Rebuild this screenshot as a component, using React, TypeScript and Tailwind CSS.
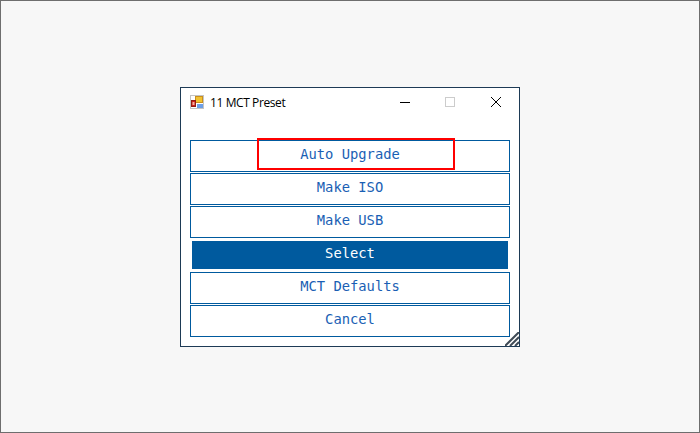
const BUTTONS = ['Auto Upgrade', 'Make ISO', 'Make USB', 'Select', 'MCT Defaults', 'Cancel']

function AppIcon() {
  return (
    <svg width="14" height="14" viewBox="0 0 14 14" className="shrink-0 -mt-[2px]">
      <rect x="0.5" y="0.5" width="13" height="13" fill="#ffffff" stroke="#c4c4c4" />
      <rect x="5.5" y="1.5" width="7" height="6" fill="#f2c230" stroke="#c98f1e" />
      <rect x="1.5" y="5.5" width="4" height="6" fill="#d01f1a" stroke="#8f1d14" />
      <rect x="2.5" y="7" width="2" height="3" fill="#f3b0a0" />
      <rect x="7" y="9" width="6" height="4" fill="#6d9fe6" />
    </svg>
  )
}

function TitleBar() {
  return (
    <div className="flex items-center h-[30px] pl-[9px] shrink-0">
      <AppIcon />
      <span className="ml-[6px] text-[12px] text-black font-['Open_Sans','Noto_Sans',sans-serif] tracking-[-0.4px]">
        11 MCT Preset
      </span>
      <div className="ml-auto flex items-center h-full">
        <svg width="46" height="30" viewBox="0 0 46 30">
          <path d="M19 14.5h10" stroke="#000000" strokeWidth="1" />
        </svg>
        <svg width="46" height="30" viewBox="0 0 46 30">
          <rect x="18.5" y="9.5" width="9" height="9" fill="none" stroke="#cccccc" />
        </svg>
        <svg width="46" height="30" viewBox="0 0 46 30">
          <path d="M18 9l10 10M28 9l-10 10" stroke="#000000" strokeWidth="1" fill="none" />
        </svg>
      </div>
    </div>
  )
}

export default function App() {
  return (
    <div className="w-[700px] h-[433px] bg-[#f7f7f7] border border-[#6e6e6e] flex items-start justify-center pt-[86px] overflow-hidden">
      <div className="relative flex flex-col w-[340px] h-[260px] bg-white border border-[#1d3a55]">
        <TitleBar />
        <div className="flex flex-col gap-px mt-[22px] px-[9px] font-['DejaVu_Sans_Mono',monospace] text-[13.8px]">
          {BUTTONS.map((label) =>
            label === 'Select' ? (
              <div key={label} className="h-[32px] p-[2px]">
                <button className="w-full h-[28px] bg-[#005a9e] text-white pb-[4px]">{label}</button>
              </div>
            ) : (
              <button key={label} className="h-[32px] bg-white border border-[#005a9e] text-[#1a5fb4] pb-[4px]">
                {label}
              </button>
            ),
          )}
        </div>

        {/* red highlight drawn on top of the first button */}
        <div className="absolute left-[76px] top-[50px] w-[198px] h-[32px] border-2 border-[#ff0000]" />

        {/* resize grip */}
        <svg width="14" height="14" viewBox="0 0 14 14" className="absolute right-0 bottom-0">
          <path d="M14 0L0 14M14 5L5 14M14 10L10 14" stroke="#3f4a55" strokeWidth="2" fill="none" />
        </svg>
      </div>
    </div>
  )
}
